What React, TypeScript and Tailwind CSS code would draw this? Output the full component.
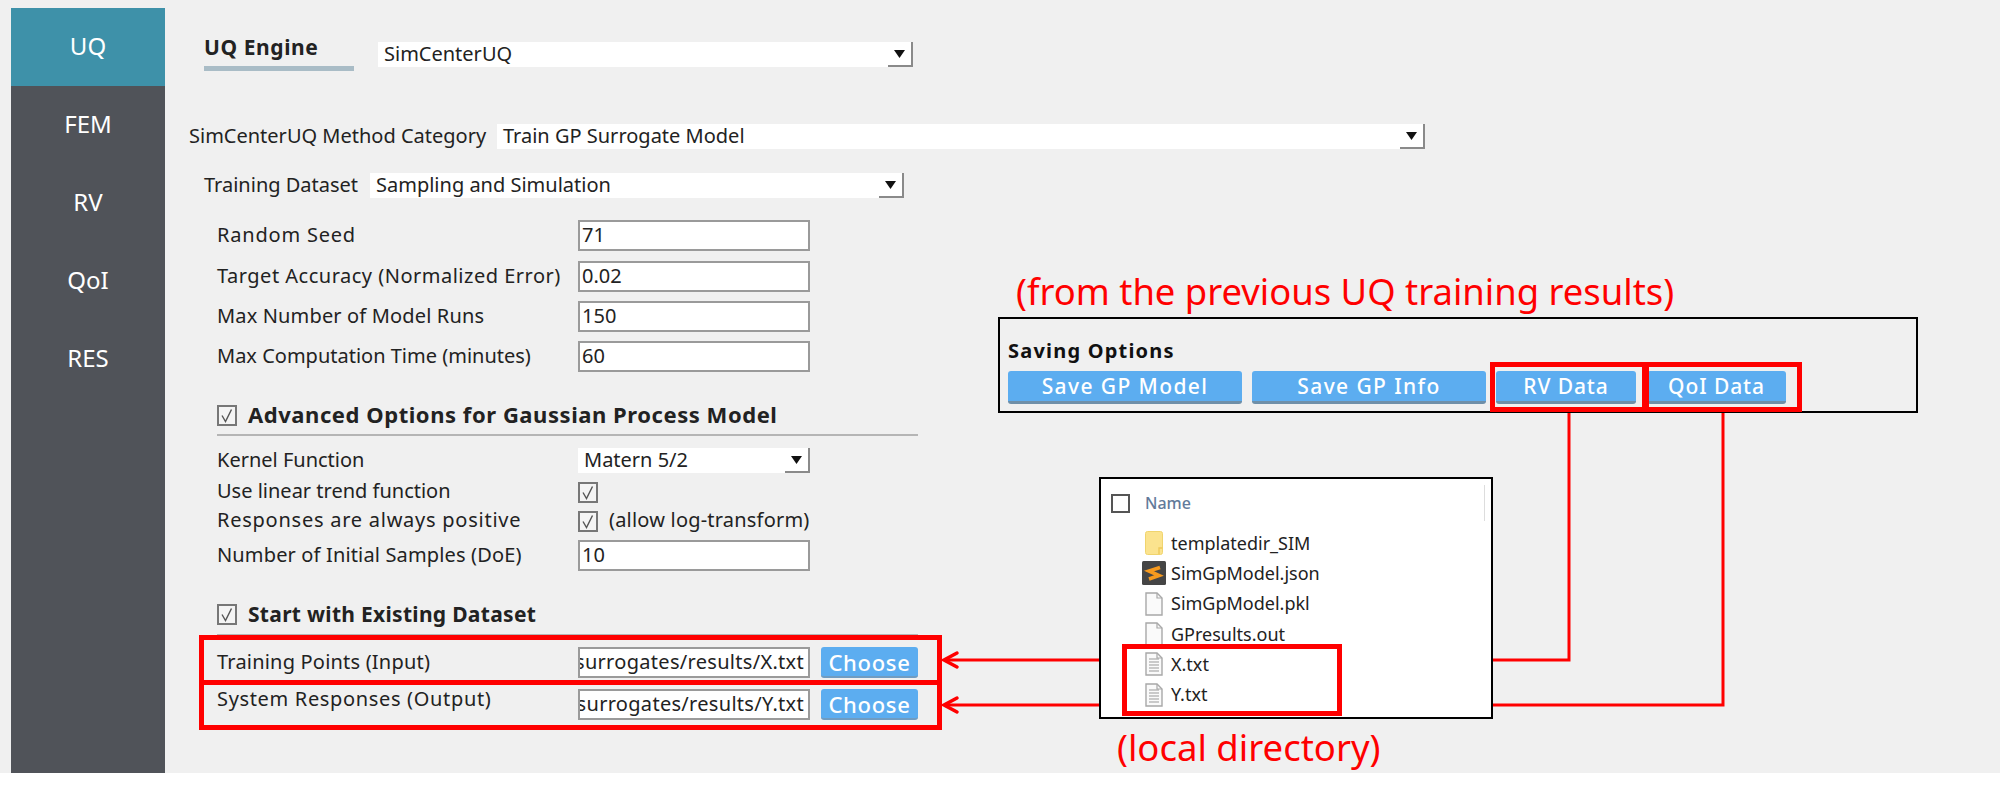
const font = "font-['Noto_Sans','Liberation_Sans',sans-serif]";

const tabs = ['UQ', 'FEM', 'RV', 'QoI', 'RES'];

function Combo({ value, className }: { value: string; className: string }) {
  return (
    <div className={`flex items-center justify-between bg-white h-[25px] pl-[6px] text-[20px] leading-[20px] text-[#222] ${className}`}>
      <span className="-mt-[2px]">{value}</span>
      <span className="flex items-center justify-center w-[25px] h-[25px] border-r-2 border-b-2 border-[#8a8a8a]">
        <svg width="11" height="8" viewBox="0 0 11 8">
          <path d="M0 0h11L5.5 8z" fill="#111" />
        </svg>
      </span>
    </div>
  );
}

function Field({ value }: { value: string }) {
  return (
    <div className="w-[232px] h-[31px] bg-white border-2 border-[#9a9a9a] pl-[2px] text-[20px] leading-[25px] text-[#222] overflow-hidden whitespace-nowrap">
      {value}
    </div>
  );
}

function Check() {
  return (
    <span className="flex items-center justify-center w-[20px] h-[21px] border-2 border-[#777] bg-[#f4f4f4]">
      <svg width="14" height="15" viewBox="0 0 14 15" fill="none">
        <path d="M2 7.5l3.5 6 6-12" stroke="#555" strokeWidth="1.4" />
      </svg>
    </span>
  );
}

function Row({ label, className, labelClass, children }: { label: string; className: string; labelClass?: string; children: React.ReactNode }) {
  return (
    <div className={`flex items-center ml-[52px] ${className}`}>
      <span className={`w-[361px] text-[20px] leading-[20px] text-[#222] whitespace-nowrap -translate-y-[1px] ${labelClass ?? ''}`}>{label}</span>
      {children}
    </div>
  );
}

function PathRow({ label, value, className, labelClass }: { label: string; value: string; className: string; labelClass?: string }) {
  return (
    <Row label={label} className={className} labelClass={labelClass}>
      <div className="w-[232px] h-[31px] bg-white border-2 border-[#9a9a9a] text-[20px] leading-[25px] tracking-[0.3px] text-[#222] overflow-hidden whitespace-nowrap flex justify-end pr-[4px]">
        {value}
      </div>
      <button className="ml-[11px] w-[97px] h-[31px] rounded-[3px] bg-[#5cadf0] border-b-2 border-[#6f9cc2] text-white text-[22px] leading-[26px] font-medium tracking-[0.7px]">
        Choose
      </button>
    </Row>
  );
}

function SaveButton({ label, className }: { label: string; className: string }) {
  return (
    <button className={`h-[33px] rounded-[3px] bg-[#5cadf0] border-b-[3px] border-[#6f8fa8] text-white text-[21px] leading-[28px] font-medium ${className}`}>
      {label}
    </button>
  );
}

function FileIcon({ lines }: { lines?: boolean }) {
  return (
    <svg width="18" height="24" viewBox="0 0 18 24" fill="none">
      <path d="M1 1h11l5 5v17H1z" fill="#fafafa" stroke="#a8a8a8" strokeWidth="1.4" />
      <path d="M12 1v5h5" stroke="#a8a8a8" strokeWidth="1.2" />
      {lines &&
        [7, 10, 13, 16, 19].map((y) => <path key={y} d={`M4 ${y}h10`} stroke="#999" strokeWidth="1" />)}
    </svg>
  );
}

function FolderIcon() {
  return (
    <svg width="18" height="24" viewBox="0 0 18 24">
      <rect x="0.5" y="0.5" width="17" height="23" rx="2" fill="#fbe38e" stroke="#f0d46e" />
      <path d="M14 23v-6h3.5" fill="none" stroke="#eec95a" strokeWidth="1.4" />
    </svg>
  );
}

function SublimeIcon() {
  return (
    <svg width="24" height="24" viewBox="0 0 24 24" className="-ml-[3px] mr-[-3px]">
      <rect width="24" height="24" rx="1.5" fill="#454545" />
      <path d="M18 6.5L7 10l10 4.5L7 18" fill="none" stroke="#f79a1e" strokeWidth="3.6" />
    </svg>
  );
}

const files = [
  { name: 'templatedir_SIM', icon: <FolderIcon /> },
  { name: 'SimGpModel.json', icon: <SublimeIcon /> },
  { name: 'SimGpModel.pkl', icon: <FileIcon /> },
  { name: 'GPresults.out', icon: <FileIcon /> },
  { name: 'X.txt', icon: <FileIcon lines /> },
  { name: 'Y.txt', icon: <FileIcon lines /> },
];

export default function App() {
  return (
    <div className={`w-[2000px] h-[791px] bg-white overflow-hidden ${font}`}>
      <div className="relative h-[773px] bg-[#f0f0f0] flex pl-[11px] pt-[8px]">
        {/* sidebar */}
        <div className="w-[154px] bg-[#505359] flex flex-col">
          {tabs.map((tab, i) => (
            <div
              key={tab}
              className={`h-[78px] flex items-center justify-center pb-[2px] text-[24px] text-white ${i === 0 ? 'bg-[#3e91a9]' : ''}`}
            >
              {tab}
            </div>
          ))}
        </div>

        {/* form */}
        <div className="flex flex-col pt-[28px]">
          <div className="flex items-start ml-[39px]">
            <div className="w-[150px] h-[35px] border-b-[5px] border-[#a9bcc6] text-[21px] font-bold leading-[22px] tracking-[0.6px] text-[#222]">
              UQ Engine
            </div>
            <Combo value="SimCenterUQ" className="ml-[24px] mt-[6px] w-[535px]" />
          </div>

          <div className="flex items-center mt-[53px] ml-[24px]">
            <span className="w-[308px] text-[20px] leading-[20px] text-[#222] whitespace-nowrap -translate-y-[1px]">SimCenterUQ Method Category</span>
            <Combo value="Train GP Surrogate Model" className="w-[928px]" />
          </div>

          <div className="flex items-center mt-[24px] ml-[39px]">
            <span className="w-[166px] text-[20px] leading-[20px] text-[#222] whitespace-nowrap -translate-y-[1px]">Training Dataset</span>
            <Combo value="Sampling and Simulation" className="w-[534px]" />
          </div>

          <Row label="Random Seed" className="mt-[22px]" labelClass="tracking-[0.8px]"><Field value="71" /></Row>
          <Row label="Target Accuracy (Normalized Error)" className="mt-[10px]" labelClass="tracking-[0.5px]"><Field value="0.02" /></Row>
          <Row label="Max Number of Model Runs" className="mt-[9px]" labelClass="tracking-[0.15px]"><Field value="150" /></Row>
          <Row label="Max Computation Time (minutes)" className="mt-[9px]"><Field value="60" /></Row>

          <div className="flex items-center gap-[11px] mt-[33px] ml-[52px] h-[20px]">
            <Check />
            <span className="text-[22px] leading-[22px] font-bold tracking-[0.55px] text-[#222] whitespace-nowrap -translate-y-[1px]">Advanced Options for Gaussian Process Model</span>
          </div>
          <div className="mt-[9px] ml-[52px] w-[701px] h-[2px] bg-[#b5b5b5]" />

          <Row label="Kernel Function" className="mt-[12px]">
            <Combo value="Matern 5/2" className="w-[232px]" />
          </Row>
          <Row label="Use linear trend function" className="mt-[9px] h-[20px]"><Check /></Row>
          <Row label="Responses are always positive" className="mt-[9px] h-[20px]" labelClass="tracking-[0.75px]">
            <Check />
            <span className="ml-[11px] text-[20px] leading-[20px] tracking-[0.2px] text-[#222] whitespace-nowrap -translate-y-[1px]">(allow log-transform)</span>
          </Row>
          <Row label="Number of Initial Samples (DoE)" className="mt-[9px]" labelClass="tracking-[0.15px]"><Field value="10" /></Row>

          <div className="flex items-center gap-[11px] mt-[33px] ml-[52px] h-[21px]">
            <Check />
            <span className="text-[21px] leading-[22px] font-bold tracking-[0.3px] text-[#222] whitespace-nowrap -translate-y-[1px]">Start with Existing Dataset</span>
          </div>
          <div className="mt-[9px] ml-[52px] w-[701px] h-[2px] bg-[#b5b5b5]" />

          <PathRow label="Training Points (Input)" value="surrogates/results/X.txt" className="mt-[11px]" labelClass="tracking-[0.2px]" />
          <PathRow label="System Responses (Output)" value="surrogates/results/Y.txt" className="mt-[11px]" labelClass="tracking-[0.66px] pb-[10px]" />
        </div>

        {/* red outlines round the two path rows */}
        <div className="absolute left-[199px] top-[635px] w-[743px] h-[50px] border-[5px] border-[#f00]" />
        <div className="absolute left-[199px] top-[680px] w-[743px] h-[50px] border-[5px] border-[#f00]" />

        {/* connectors */}
        <svg className="absolute left-0 top-0" width="2000" height="773" fill="none">
          <path d="M1569 412V660H945M1723 412V705H945" stroke="#f00" strokeWidth="3" />
          <path d="M957 653l-13 7 13 7M957 698l-13 7 13 7" stroke="#f00" strokeWidth="3.5" strokeLinecap="round" />
        </svg>

        {/* saving options */}
        <div className="absolute left-[1016px] top-[269px] text-[36.4px] leading-[44px] text-[#f00] whitespace-nowrap">
          (from the previous UQ training results)
        </div>
        <div className="absolute left-[998px] top-[317px] w-[920px] h-[96px] border-2 border-black pl-[8px] pt-[21px]">
          <div className="text-[20px] font-bold leading-[22px] tracking-[1.2px] text-[#111]">Saving Options</div>
          <div className="flex mt-[9px]">
            <SaveButton label="Save GP Model" className="w-[234px] tracking-[1.4px]" />
            <SaveButton label="Save GP Info" className="w-[234px] ml-[10px] tracking-[1.4px]" />
            <SaveButton label="RV Data" className="w-[140px] ml-[10px] tracking-[0.9px]" />
            <SaveButton label="QoI Data" className="w-[139px] ml-[11px] tracking-[0.9px]" />
          </div>
        </div>
        <div className="absolute left-[1490px] top-[362px] w-[157px] h-[50px] border-[5px] border-[#f00]" />
        <div className="absolute left-[1644px] top-[362px] w-[158px] h-[50px] border-[5px] border-[#f00]" />

        {/* file listing */}
        <div className="absolute left-[1099px] top-[477px] w-[394px] h-[242px] bg-white border-2 border-black overflow-hidden">
          <div className="flex items-center h-[20px] mt-[14px] ml-[10px]">
            <span className="w-[19px] h-[19px] border-2 border-[#555]" />
            <span className="ml-[15px] text-[16px] font-medium text-[#627a9a]">Name</span>
          </div>
          <div className="absolute right-[6px] top-[6px] w-[1px] h-[36px] bg-[#ddd]" />
          <div className="flex flex-col mt-[15px] ml-[44px]">
            {files.map((file) => (
              <div key={file.name} className="flex items-center gap-[8px] h-[30.3px] text-[18px] text-[#222]">
                {file.icon}
                <span>{file.name}</span>
              </div>
            ))}
          </div>
        </div>
        <div className="absolute left-[1122px] top-[644px] w-[220px] h-[72px] border-[5px] border-[#f00]" />
        <div className="absolute left-[1117px] top-[725px] text-[36.5px] leading-[44px] text-[#f00] whitespace-nowrap">
          (local directory)
        </div>
      </div>
    </div>
  );
}
